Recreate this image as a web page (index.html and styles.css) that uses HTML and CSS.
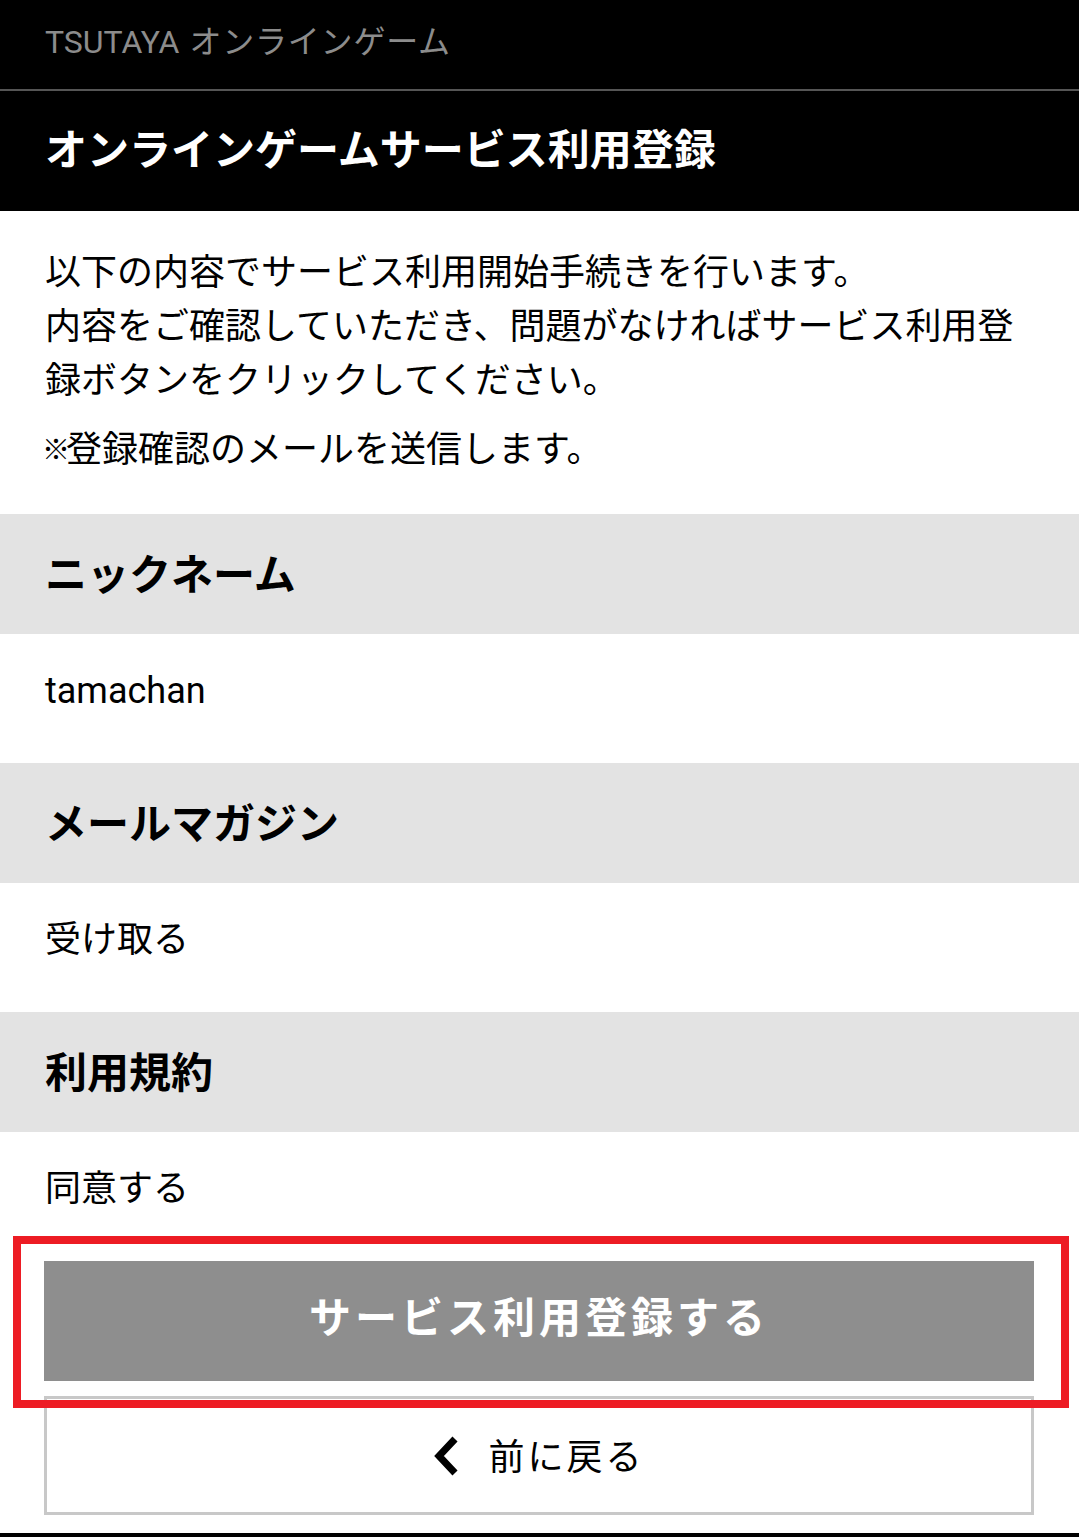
FILE: index.html
```html
<!DOCTYPE html>
<html lang="ja">
<head>
<meta charset="utf-8">
<title>オンラインゲームサービス利用登録</title>
<link rel="stylesheet" href="styles.css">
</head>
<body>
<header class="site-header">TSUTAYA <span class="header-ja">オンラインゲーム</span></header>
<h1 class="page-title">オンラインゲームサービス利用登録</h1>
<section class="intro">
  <p>以下の内容でサービス利用開始手続きを行います。<br>内容をご確認していただき、問題がなければサービス利用登録ボタンをクリックしてください。</p>
  <p class="note"><span class="mark">※</span>登録確認のメールを送信します。</p>
</section>
<dl class="summary">
  <dt class="summary-label">ニックネーム</dt>
  <dd class="summary-value">tamachan</dd>
  <dt class="summary-label">メールマガジン</dt>
  <dd class="summary-value">受け取る</dd>
  <dt class="summary-label">利用規約</dt>
  <dd class="summary-value">同意する</dd>
</dl>
<div class="actions">
  <div class="primary-wrap">
    <button class="btn btn-primary" type="button">サービス利用登録する</button>
    <span class="highlight" aria-hidden="true"></span>
  </div>
  <button class="btn btn-back" type="button">
    <svg class="chev" width="26" height="40" viewBox="0 0 26 40" aria-hidden="true"><path d="M22 3 L6 20 L22 37" fill="none" stroke="#000" stroke-width="7"/></svg>
    <span class="back-label">前に戻る</span>
  </button>
</div>
<footer class="site-footer"></footer>
</body>
</html>
```
FILE: styles.css
```css
html, body {
  margin: 0;
  padding: 0;
  background: #fff;
}
body {
  font-family: Roboto, "Noto Sans CJK JP", sans-serif;
  color: #000;
}
.site-header {
  background: #000;
  color: #8c8c8c;
  font-size: 32px;
  height: 89px;
  line-height: 84px;
  padding: 0 45px;
  border-bottom: 2px solid #555;
  white-space: nowrap;
}
.header-ja {
  letter-spacing: 0.8px;
  margin-left: 2px;
}
.page-title {
  margin: 0;
  background: #000;
  color: #fff;
  font-size: 42px;
  font-weight: 700;
  height: 120px;
  padding: 0 45px 10px;
  display: flex;
  align-items: center;
  box-sizing: border-box;
}
.intro {
  padding: 35px 45px 37px;
  font-size: 36px;
  line-height: 54px;
}
.intro p {
  margin: 0;
}
.intro .note {
  margin-top: 15px;
}
.mark {
  font-size: 28px;
  line-height: 0;
  letter-spacing: -4px;
  margin-left: -3px;
  position: relative;
  top: -2px;
}
.summary {
  margin: 0;
}
.summary-label {
  background: #e3e3e3;
  height: 120px;
  box-sizing: border-box;
  padding: 0 45px 6px;
  display: flex;
  align-items: center;
  font-size: 42px;
  font-weight: 700;
}
.summary-value {
  margin: 0;
  padding: 30px 45px 45px;
  font-size: 36px;
  line-height: 54px;
}
.actions {
  padding: 0 45px 18px 44px;
  display: flex;
  flex-direction: column;
  gap: 15px;
}
.primary-wrap {
  position: relative;
}
.btn {
  display: flex;
  align-items: center;
  justify-content: center;
  width: 100%;
  margin: 0;
  font-family: inherit;
  cursor: pointer;
  box-sizing: border-box;
}
.btn-primary {
  height: 120px;
  background: #8e8e8e;
  border: none;
  color: #fff;
  font-size: 42px;
  font-weight: 700;
  letter-spacing: 4px;
  padding: 0 0 14px;
}
.highlight {
  position: absolute;
  top: -25px;
  left: -31px;
  right: -35px;
  bottom: -27px;
  border: 8px solid #ed1c24;
  pointer-events: none;
}
.btn-back {
  height: 119px;
  background: #fff;
  border: 3px solid #c8c8c8;
  color: #000;
  font-size: 36px;
  gap: 29px;
  padding: 0 0 4px;
}
.chev {
  display: block;
  margin-top: 4px;
}
.back-label {
  letter-spacing: 3px;
}
.site-footer {
  background: #000;
  height: 40px;
}
```
